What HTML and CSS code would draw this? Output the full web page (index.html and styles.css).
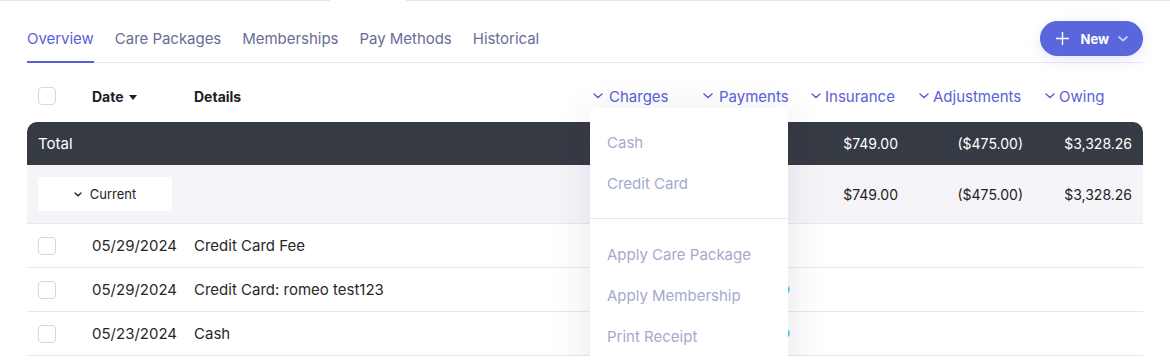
FILE: index.html
```html
<!DOCTYPE html>
<html lang="en">
<head>
    <meta charset="UTF-8">
    <meta name="viewport" content="width=device-width, initial-scale=1.0">
    <title>Billing Overview</title>
    <link rel="stylesheet" href="styles.css">
</head>
<body>
    <div class="top-edge">
        <span class="edge-left"></span>
        <span class="edge-right"></span>
    </div>

    <div class="page">
        <div class="page-head">
            <nav class="tabs">
                <a class="tab active">Overview</a>
                <a class="tab">Care Packages</a>
                <a class="tab">Memberships</a>
                <a class="tab">Pay Methods</a>
                <a class="tab">Historical</a>
            </nav>
            <button class="btn-new">
                <svg width="15" height="15" viewBox="0 0 15 15"><path d="M7.5 1v13M1 7.5h13" stroke="#fff" stroke-width="1.4" fill="none"/></svg>
                <span>New</span>
                <svg class="btn-chev" width="10" height="6" viewBox="0 0 10 6"><path d="M1 1l4 3.5L9 1" stroke="#c9cdf3" stroke-width="1.8" fill="none" stroke-linecap="round" stroke-linejoin="round"/></svg>
            </button>
        </div>

        <div class="ledger">
            <div class="row head-row">
                <div class="cell"><span class="check"></span></div>
                <div class="cell th">Date <span class="caret"></span></div>
                <div class="cell th">Details</div>
                <div class="cell col-head">
                    <svg width="10" height="6" viewBox="0 0 10 6"><path d="M1 1l4 3.5L9 1" stroke="currentColor" stroke-width="1.5" fill="none" stroke-linecap="round"/></svg>
                    Charges
                </div>
                <div class="cell col-head">
                    <svg width="10" height="6" viewBox="0 0 10 6"><path d="M1 1l4 3.5L9 1" stroke="currentColor" stroke-width="1.5" fill="none" stroke-linecap="round"/></svg>
                    Payments
                </div>
                <div class="cell col-head tight">
                    <svg width="10" height="6" viewBox="0 0 10 6"><path d="M1 1l4 3.5L9 1" stroke="currentColor" stroke-width="1.5" fill="none" stroke-linecap="round"/></svg>
                    Insurance
                </div>
                <div class="cell col-head tight">
                    <svg width="10" height="6" viewBox="0 0 10 6"><path d="M1 1l4 3.5L9 1" stroke="currentColor" stroke-width="1.5" fill="none" stroke-linecap="round"/></svg>
                    Adjustments
                </div>
                <div class="cell col-head tight owing">
                    <svg width="10" height="6" viewBox="0 0 10 6"><path d="M1 1l4 3.5L9 1" stroke="currentColor" stroke-width="1.5" fill="none" stroke-linecap="round"/></svg>
                    Owing
                </div>
            </div>

            <div class="row total-row">
                <div class="cell label">Total</div>
                <div class="cell"></div>
                <div class="cell"></div>
                <div class="cell"></div>
                <div class="cell"></div>
                <div class="cell num ins">$749.00</div>
                <div class="cell num adj">($475.00)</div>
                <div class="cell num">$3,328.26</div>
            </div>

            <div class="row group-row">
                <div class="cell label">
                    <button class="group-btn">
                        <svg width="8" height="5" viewBox="0 0 8 5"><path d="M1 1l3 2.8L7 1" stroke="#222" stroke-width="1.3" fill="none" stroke-linecap="round"/></svg>
                        Current
                    </button>
                </div>
                <div class="cell"></div>
                <div class="cell"></div>
                <div class="cell"></div>
                <div class="cell"></div>
                <div class="cell num ins">$749.00</div>
                <div class="cell num adj">($475.00)</div>
                <div class="cell num">$3,328.26</div>
            </div>

            <div class="row item-row">
                <div class="cell"><span class="check"></span></div>
                <div class="cell">05/29/2024</div>
                <div class="cell">Credit Card Fee</div>
                <div class="cell"></div>
                <div class="cell"></div>
                <div class="cell"></div>
                <div class="cell"></div>
                <div class="cell"></div>
            </div>
            <div class="row item-row">
                <div class="cell"><span class="check"></span></div>
                <div class="cell">05/29/2024</div>
                <div class="cell">Credit Card: romeo test123</div>
                <div class="cell"></div>
                <div class="cell pay"><span class="pay-dot"></span></div>
                <div class="cell"></div>
                <div class="cell"></div>
                <div class="cell"></div>
            </div>
            <div class="row item-row">
                <div class="cell"><span class="check"></span></div>
                <div class="cell">05/23/2024</div>
                <div class="cell">Cash</div>
                <div class="cell"></div>
                <div class="cell pay"><span class="pay-dot"></span></div>
                <div class="cell"></div>
                <div class="cell"></div>
                <div class="cell"></div>
            </div>

            <!-- Charges dropdown -->
            <div class="menu">
                <div class="menu-group">
                    <div class="menu-item">Cash</div>
                    <div class="menu-item">Credit Card</div>
                </div>
                <div class="menu-group">
                    <div class="menu-item">Apply Care Package</div>
                    <div class="menu-item">Apply Membership</div>
                    <div class="menu-item">Print Receipt</div>
                </div>
            </div>
        </div>
    </div>
</body>
</html>
```

FILE: styles.css
```css
/* General */
body {
    margin: 0;
    background: #ffffff;
    font-family: 'Inter', 'Noto Sans', sans-serif;
    font-size: 15px;
    color: #2a2a2e;
    overflow: hidden;
}

.top-edge {
    display: flex;
    height: 1px;
}

.edge-left {
    width: 330px;
    background: #e6e6ee;
}

.edge-right {
    flex: 1;
    margin-left: 76px;
    background: #e6e6ee;
}

.page {
    padding: 0 27px;
}

/* Tabs + New button */
.page-head {
    display: flex;
    justify-content: space-between;
    align-items: flex-end;
    padding-top: 20px;
    border-bottom: 1px solid #e8e8f0;
}

.tabs {
    display: flex;
    gap: 21px;
}

.tab {
    line-height: 22px;
    padding-bottom: 11px;
    border-bottom: 2px solid transparent;
    margin-bottom: -1px;
    color: #686d96;
    font-size: 15px;
    letter-spacing: -0.03px;
}

.tab.active {
    color: #5a60d8;
    border-bottom-color: #5a60d8;
}

.btn-new {
    display: flex;
    align-items: center;
    height: 35px;
    margin-bottom: 6px;
    padding: 0 15px 0 15px;
    border: none;
    border-radius: 18px;
    background: #5966dc;
    color: #fff;
    font-family: inherit;
    font-size: 13px;
    font-weight: 700;
    box-shadow: 0 4px 14px rgba(89, 102, 220, 0.15);
}

.btn-new span {
    margin-left: 10px;
    margin-right: 9px;
}

/* Ledger table */
.ledger {
    position: relative;
}

.row {
    display: grid;
    grid-template-columns: 54px 102px 396px 110px 108px 108px 124px 92px;
    padding: 0 11px;
    align-items: center;
}

.head-row {
    padding-top: 21px;
    padding-bottom: 14px;
    height: 24px;
}

.th {
    font-weight: 700;
    font-size: 14px;
    color: #1d1d22;
}

.caret {
    display: inline-block;
    width: 0;
    height: 0;
    margin-left: 2px;
    vertical-align: 2px;
    border-left: 4px solid transparent;
    border-right: 4px solid transparent;
    border-top: 5px solid #1d1d22;
}

.col-head {
    display: flex;
    align-items: center;
    gap: 6px;
    padding-left: 3px;
    color: #5a60d8;
    font-size: 15px;
}

.col-head.tight {
    gap: 4px;
}

.col-head.owing {
    padding-left: 5px;
}

.check {
    display: block;
    width: 16px;
    height: 16px;
    border: 1.5px solid #d3d6e2;
    border-radius: 4px;
}

.total-row {
    height: 43px;
    background: #363a43;
    color: #ffffff;
    border-radius: 10px 10px 0 0;
}

.num {
    text-align: right;
    font-size: 14px;
}

.row .ins {
    padding-right: 18px;
}

.row .adj {
    padding-right: 17px;
}

.group-row {
    height: 58px;
    background: #f5f5f9;
    border-bottom: 1px solid #e8e8ee;
    color: #222;
}

.group-btn {
    display: flex;
    align-items: center;
    justify-content: center;
    gap: 8px;
    width: 134px;
    height: 34px;
    border: none;
    border-radius: 3px;
    background: #ffffff;
    font-family: inherit;
    font-size: 13px;
    color: #222;
}

.label {
    white-space: nowrap;
}

.item-row {
    height: 43px;
    border-bottom: 1px solid #e8e8ee;
    color: #28282c;
}

.pay {
    display: flex;
    justify-content: flex-end;
}

.pay-dot {
    display: block;
    width: 9px;
    height: 9px;
    margin-right: 18px;
    border-radius: 50%;
    background: #4fdcf3;
}

/* Dropdown */
.menu {
    position: absolute;
    top: 45px;
    left: 563px;
    width: 198px;
    height: 300px;
    background: #ffffff;
    border-radius: 5px;
    box-shadow: 0 8px 40px rgba(40, 40, 90, 0.12);
}

.menu-group {
    padding: 14px 0;
}

.menu-group + .menu-group {
    border-top: 1px solid #e6e6ee;
    padding-top: 15px;
}

.menu-item {
    height: 41px;
    line-height: 41px;
    padding-left: 17px;
    color: #a4aacd;
    font-size: 15px;
}
```
